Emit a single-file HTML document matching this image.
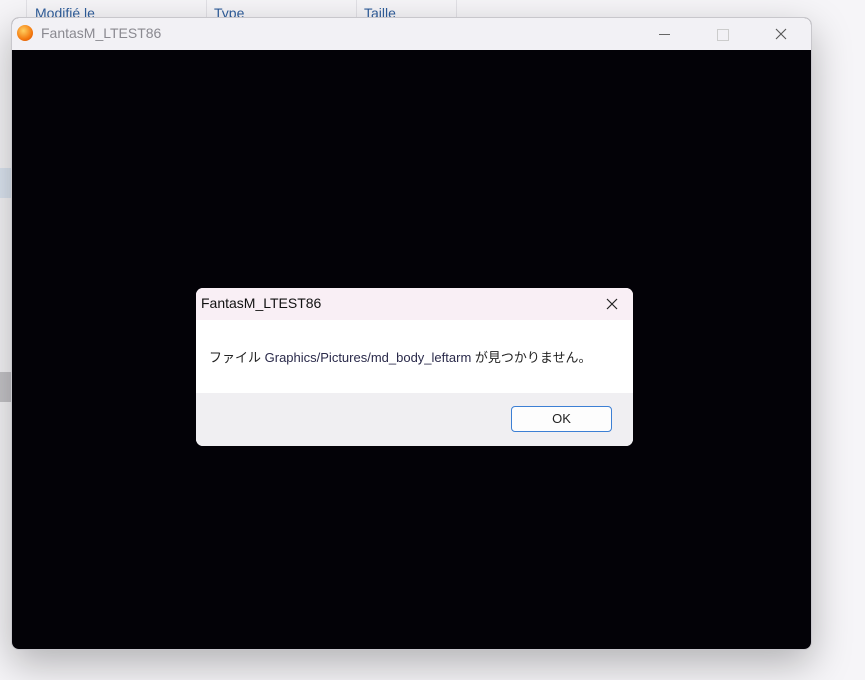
<!DOCTYPE html>
<html><head><meta charset="utf-8"><style>
body{margin:0;width:865px;height:680px;background:#f6f5f8;position:relative;overflow:hidden;font-family:"Segoe UI","Liberation Sans","Noto Sans CJK JP",sans-serif}
.hdr{position:absolute;top:0;height:22px;font-size:14px;color:#2f5e9c;}
.sep{position:absolute;top:0;height:20px;width:1px;background:#e2e1e6}
.win{position:absolute;left:11px;top:17px;width:799px;height:631px;border:1px solid #c8c7cc;border-radius:8px;background:#030207;overflow:hidden;box-shadow:0 14px 40px rgba(0,0,0,.28)}
.tb{height:32px;background:#f2f1f5;position:relative;font-size:14px;color:#8a8990}
.dlg{position:absolute;left:196px;top:288px;width:437px;height:158px;border-radius:7px;overflow:hidden;background:#fff}
</style></head><body>
<div style="position:absolute;left:0;top:168px;width:11px;height:30px;background:#dde6f2"></div>
<div style="position:absolute;left:0;top:372px;width:11px;height:30px;background:#c6c5c9"></div>
<div class="sep" style="left:26px"></div><div class="sep" style="left:206px"></div><div class="sep" style="left:356px"></div><div class="sep" style="left:456px"></div>
<div class="hdr" style="left:35px;top:5px">Modifié le</div>
<div class="hdr" style="left:214px;top:5px">Type</div>
<div class="hdr" style="left:364px;top:5px">Taille</div>
<div class="win">
<div class="tb">
<div style="position:absolute;left:5px;top:7px;width:16px;height:16px;border-radius:50%;background:radial-gradient(circle at 40% 35%,#ffd060,#f47a10 60%,#d04a00)"></div>
<div style="position:absolute;left:29px;top:7px">FantasM_LTEST86</div>
<div style="position:absolute;left:647px;top:16px;width:11px;height:1px;background:#666"></div>
<div style="position:absolute;left:705px;top:11px;width:10px;height:10px;border:1px solid #ccc"></div>
<svg style="position:absolute;left:763px;top:10px" width="12" height="12"><path d="M1 1L11 11M11 1L1 11" stroke="#555" stroke-width="1.1"/></svg>
</div>
</div>
<div class="dlg">
<div style="height:32px;background:#f9eff5;position:relative;font-size:14px;color:#111"><div style="position:absolute;left:5px;top:7px">FantasM_LTEST86</div>
<svg style="position:absolute;left:410px;top:10px" width="12" height="12"><path d="M1 1L11 11M11 1L1 11" stroke="#222" stroke-width="1.2"/></svg></div>
<div style="height:73px;position:relative;font-size:13px;color:#222"><div style="position:absolute;left:13px;top:27px;white-space:nowrap">ファイル <span style="color:#2a2a4a">Graphics/Pictures/md_body_leftarm</span> が見つかりません。</div></div>
<div style="height:53px;background:#f0eff2;position:relative"><div style="position:absolute;left:315px;top:13px;width:99px;height:24px;border:1px solid #3c7fd4;border-radius:4px;background:#fdfdfd;text-align:center;line-height:24px;font-size:13px;color:#222">OK</div></div>
</div>
</body></html>
